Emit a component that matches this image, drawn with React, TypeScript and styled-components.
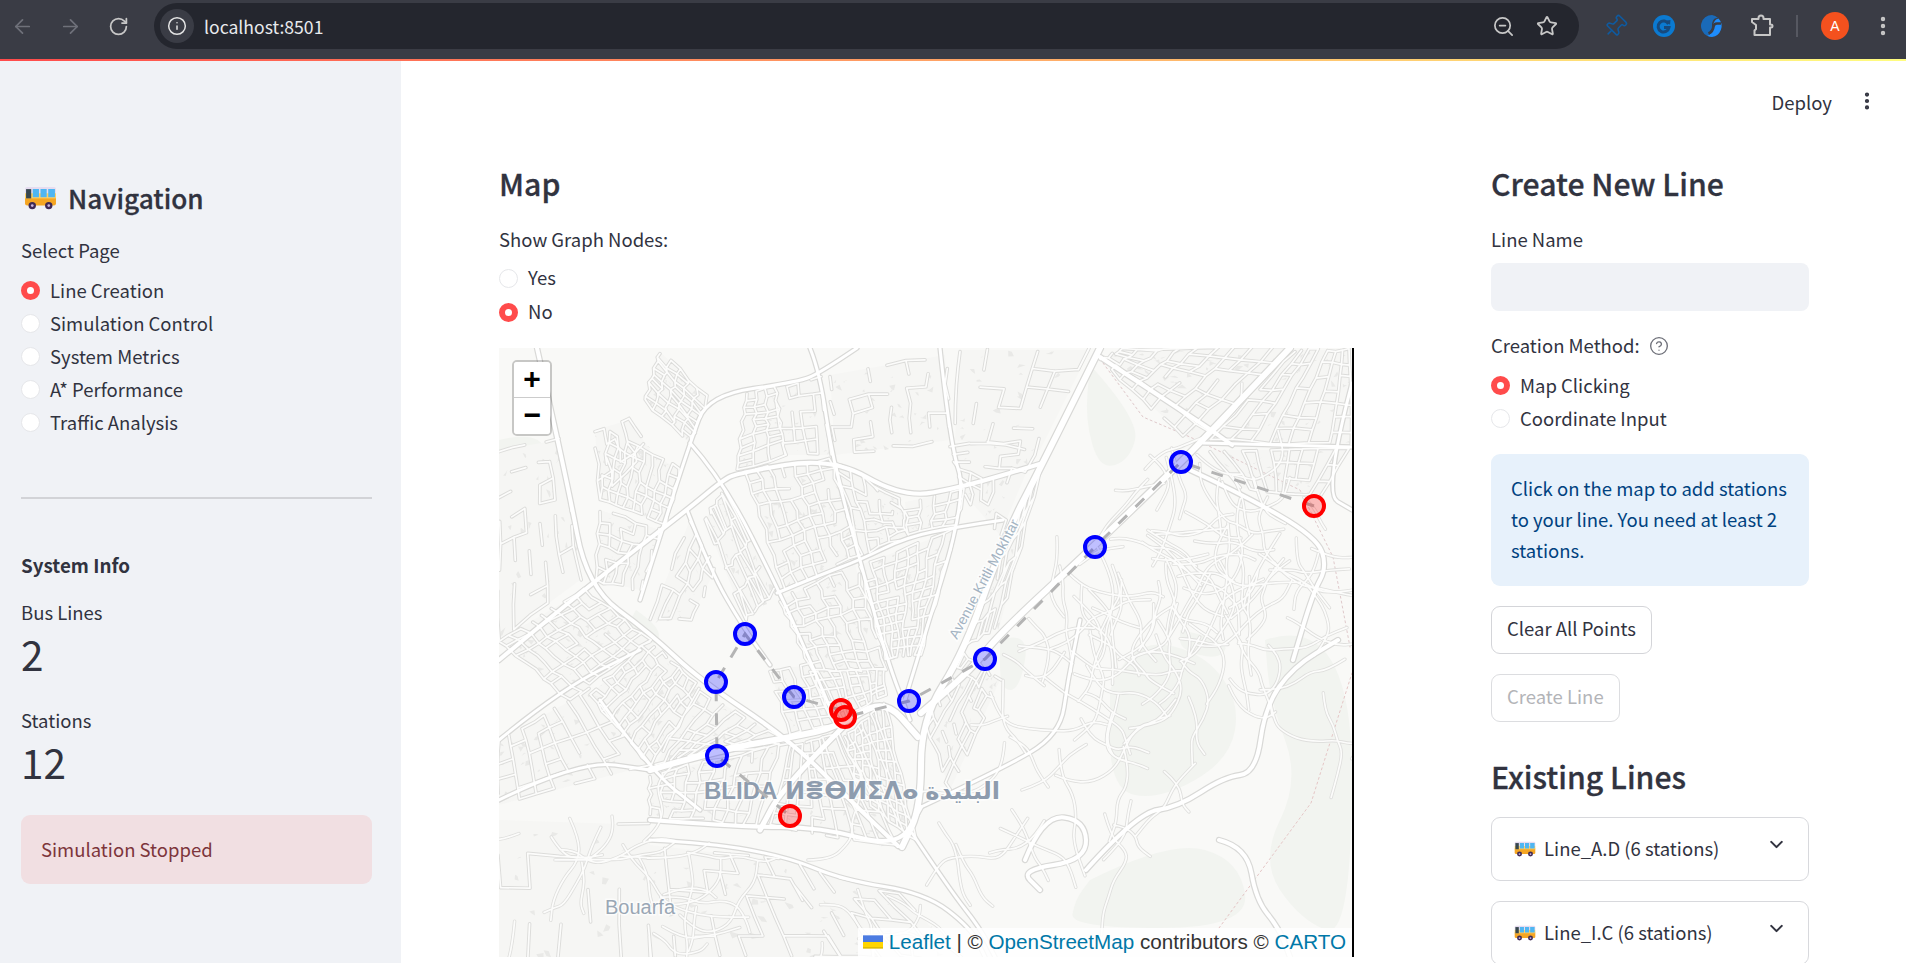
import React from 'react'
import styled, { createGlobalStyle } from 'styled-components'
import { ArrowLeft, ArrowRight, ChevronDown, CircleHelp, EllipsisVertical, Info, Pin, RotateCw, Star, ZoomOut } from 'lucide-react'

const sans = `"Noto Sans CJK SC", "Noto Sans", sans-serif`
const ink = '#31333f'

const GlobalStyle = createGlobalStyle`
  html, body { margin: 0; padding: 0; background: #fff; }
  body { font-family: ${sans}; color: ${ink}; }
  * { box-sizing: border-box; }
`

const Screen = styled.div`
  position: relative;
  height: 963px;
  overflow: hidden;
  display: flex;
  flex-direction: column;
`

/* browser chrome */
const Toolbar = styled.div`
  height: 59px;
  flex: none;
  display: flex;
  align-items: center;
  padding-bottom: 7px;
  background: #3a3c45;
`

const Slot = styled.div<{ $w: number; $color?: string }>`
  width: ${p => p.$w}px;
  flex: none;
  display: flex;
  align-items: center;
  justify-content: center;
  color: ${p => p.$color || '#c7c7c7'};
`

const Gap = styled.div<{ $w: number }>`
  width: ${p => p.$w}px;
  flex: none;
`

const Omnibox = styled.div`
  width: 1425px;
  height: 46px;
  flex: none;
  display: flex;
  align-items: center;
  padding: 0 0 0 6px;
  border-radius: 23px;
  background: #24262e;
`

const SiteInfo = styled.div`
  width: 34px;
  height: 34px;
  border-radius: 50%;
  display: flex;
  align-items: center;
  justify-content: center;
  color: #e3e3e3;
  background: #3a3c45;
`

const Url = styled.span`
  margin-left: 10px;
  flex: 1;
  font-size: 17.600px;
  color: #e8eaed;
`

const Separator = styled.div`
  width: 2px;
  height: 22px;
  background: #565861;
`

const Avatar = styled.div`
  width: 28px;
  height: 28px;
  border-radius: 50%;
  display: flex;
  align-items: center;
  justify-content: center;
  font: 14px "Liberation Sans", sans-serif;
  color: #fff;
  background: #f4511e;
`

const Decoration = styled.div`
  position: absolute;
  top: 59px;
  left: 0;
  right: 0;
  height: 2px;
  background: linear-gradient(90deg, #ff4b4b, #fffd80);
`

/* page */
const Body = styled.div`
  flex: 1;
  min-height: 0;
  display: flex;
`

const Sidebar = styled.aside`
  width: 401px;
  flex: none;
  display: flex;
  flex-direction: column;
  padding: 120px 29px 0 21px;
  background: #f0f2f6;
`

const NavHeading = styled.h2`
  margin: 0;
  display: flex;
  align-items: center;
  gap: 11px;
  padding: 0 0 2px 3px;
  font-size: 26.200px;
  line-height: 38px;
  font-weight: 500;
  -webkit-text-stroke: 0.3px ${ink};
`

const Label = styled.div<{ $top: number }>`
  margin-top: ${p => p.$top}px;
  display: flex;
  align-items: center;
  gap: 9px;
  font-size: 18.500px;
  line-height: 23px;
  padding-bottom: 1px;
`

const RadioGroup = styled.div<{ $top: number }>`
  margin-top: ${p => p.$top}px;
  display: flex;
  flex-direction: column;
`

const RadioRow = styled.div<{ $h?: number }>`
  height: ${p => p.$h || 33}px;
  display: flex;
  align-items: center;
  gap: 10px;
  font-size: 18.500px;
`

const RadioText = styled.span`
  padding-bottom: 2px;
`

const RadioDot = styled.span<{ $on?: boolean }>`
  width: 19px;
  height: 19px;
  flex: none;
  border-radius: 50%;
  background: #fff;
  border: ${p => (p.$on ? '6px solid #ff4b4b' : '1px solid #e6e7ea')};
`

const Rule = styled.hr`
  width: 100%;
  margin: 58px 0 0;
  border: 0;
  border-top: 2px solid #d2d3d7;
`

const InfoHeading = styled.div`
  margin-top: 52px;
  font-size: 18.800px;
  line-height: 28px;
  font-weight: 600;
`

const MetricValue = styled.div`
  margin: -1px 0 1px;
  font-size: 40.500px;
  line-height: 60px;
`

const StatusBox = styled.div`
  height: 69px;
  margin-top: 22px;
  padding: 0 0 2px 20px;
  display: flex;
  align-items: center;
  border-radius: 9px;
  font-size: 18.500px;
  color: #7d353b;
  background: #f1dfe2;
`

const Main = styled.main`
  flex: 1;
  min-width: 0;
  display: flex;
  flex-direction: column;
`

const Header = styled.header`
  height: 104px;
  flex: none;
  display: flex;
  justify-content: flex-end;
  align-items: flex-start;
  padding: 31px 28px 0 0;
  gap: 24px;
`

const Deploy = styled.span`
  font-size: 18.500px;
  line-height: 24px;
`

const Columns = styled.div`
  display: flex;
  gap: 137px;
  padding-left: 98px;
`

const MapColumn = styled.section`
  width: 855px;
  flex: none;
`

const SideColumn = styled.section`
  width: 318px;
  flex: none;
  display: flex;
  flex-direction: column;
`

const Heading = styled.h3<{ $top?: number }>`
  margin: ${p => p.$top || 0}px 0 0;
  padding-bottom: 3px;
  font-size: 30.200px;
  line-height: 41px;
  font-weight: 500;
  -webkit-text-stroke: 0.3px ${ink};
`

const MapFrame = styled.div`
  position: relative;
  width: 855px;
  height: 609px;
  margin-top: 19px;
  border-right: 2px solid #000;
  overflow: hidden;
`

const MapCanvas = styled.svg`
  display: block;
  width: 853px;
  height: 609px;
  background: #f9f9f7;
`

const MapLabel = styled.text<{ $size: number; $color: string; $bold?: boolean }>`
  font-family: "Liberation Sans", "DejaVu Sans", sans-serif;
  font-size: ${p => p.$size}px;
  font-weight: ${p => (p.$bold ? 700 : 400)};
  fill: ${p => p.$color};
  stroke: rgba(255, 255, 255, 0.7);
  stroke-width: 3px;
  paint-order: stroke;
`

const ZoomControl = styled.div`
  position: absolute;
  top: 12px;
  left: 13px;
  width: 40px;
  border: 2px solid rgba(0, 0, 0, 0.2);
  border-radius: 5px;
  background-clip: padding-box;
`

const ZoomButton = styled.div<{ $first?: boolean }>`
  height: 36px;
  padding-top: 2px;
  display: flex;
  align-items: center;
  justify-content: center;
  font: 700 30px "Liberation Mono", monospace;
  color: #000;
  background: #fff;
  border-bottom: ${p => (p.$first ? '1px solid #ccc' : '0')};
  border-radius: ${p => (p.$first ? '3px 3px 0 0' : '0 0 3px 3px')};
`

const Attribution = styled.div`
  position: absolute;
  right: 0;
  bottom: 0;
  height: 29px;
  display: flex;
  align-items: center;
  gap: 6px;
  padding: 0 6px 2px 5px;
  font: 20.650px "Liberation Sans", sans-serif;
  color: #333;
  background: rgba(255, 255, 255, 0.85);
  white-space: pre;
`

const MapLink = styled.span`
  color: #0078a8;
`

const TextInput = styled.div`
  height: 48px;
  margin-top: 11px;
  border-radius: 8px;
  background: #f0f2f6;
`

const InfoBox = styled.div`
  margin-top: 19px;
  padding: 19px 19px 20px 20px;
  border-radius: 9px;
  font-size: 18.500px;
  line-height: 31px;
  color: #004280;
  background: #e7f1fb;
`

const Button = styled.div<{ $top: number; $disabled?: boolean }>`
  align-self: flex-start;
  height: 48px;
  margin-top: ${p => p.$top}px;
  padding: 0 15px 4px;
  display: flex;
  align-items: center;
  border: 1px solid ${p => (p.$disabled ? '#dcdde0' : '#d4d5d9')};
  border-radius: 9px;
  font-size: 18.500px;
  color: ${p => (p.$disabled ? '#b3b4b8' : ink)};
`

const Expander = styled.div<{ $top: number }>`
  height: 64px;
  flex: none;
  margin-top: ${p => p.$top}px;
  padding: 0 21px 0 22px;
  display: flex;
  align-items: center;
  gap: 8px;
  border: 1px solid #d8d9dd;
  border-radius: 9px;
  font-size: 18.500px;
`

const ExpanderTitle = styled.span`
  flex: 1;
  padding-bottom: 2px;
`

const Chevron = styled(ChevronDown)`
  margin-bottom: 10px;
`

const BusIcon = ({ w }: { w: number }) => (
  <svg width={w} height={w * 0.72} viewBox="0 0 32 23">
    <path d="M3 1h26q2 0 2 2v4H1V3q0-2 2-2z" fill="#e6dcf0" />
    <path d="M1 11h30v6q0 2-2 2H3q-2 0-2-2z" fill="#f5a623" />
    <path d="M1 7h30v5H1z" fill="#ffd166" />
    <path d="M2 3h5v9H2z" fill="#37474f" />
    <path d="M8.5 3h6v8h-6zM16 3h6v8h-6zM23.500 3H30v8h-6.500z" fill="#4fb6f2" />
    <circle cx="8" cy="19" r="3.600" fill="#3f2a56" />
    <circle cx="24" cy="19" r="3.600" fill="#3f2a56" />
    <circle cx="8" cy="19" r="1.300" fill="#cbb6dd" />
    <circle cx="24" cy="19" r="1.300" fill="#cbb6dd" />
  </svg>
)

const PuzzleIcon = () => (
  <svg width="24" height="24" viewBox="0 0 24 24" fill="none" stroke="#c7c7c7" strokeWidth="2" strokeLinejoin="round">
    <path d="M2 5h6.500V4a2.500 2.500 0 0 1 5 0v1H20v5.500h1a1.500 1.500 0 0 1 0 3h-1V21H4.500v-4.500l1.500-1.500v-4L2 8z" />
  </svg>
)

const SyncIcon = () => (
  <svg width="24" height="24" viewBox="0 0 24 24" fill="none">
    <circle cx="12" cy="12" r="11" fill="#0b7ad1" />
    <path d="M16.500 10a5.500 5.500 0 1 0 .5 3.500h-5" stroke="#17497c" strokeWidth="3" />
    <path d="M15 6.500l3.500-.5-.5 5z" fill="#17497c" />
  </svg>
)

const SwirlIcon = () => (
  <svg width="24" height="24" viewBox="0 0 24 24" fill="none">
    <path d="M12 1a11 11 0 0 0-5 20.800q5-1 5-9.800t6-8A11 11 0 0 0 12 1z" fill="#1a6ab8" />
    <path d="M18.500 4.500A11 11 0 0 1 12 23a11 11 0 0 1-5-1.200q5-1 6-9.800 1-7 5.500-7.500z" fill="#1e8cfb" />
    <path d="M21 9.500h-4q-3 0-3.500 3-.5 5-5 7" stroke="#3a3c45" strokeWidth="2.600" />
  </svg>
)

/* map drawing, in page coordinates (viewBox starts at the frame's corner) */
type Pt = [number, number]
type Quad = [Pt, Pt, Pt, Pt, number, number, number]

function rng(seed: number) {
  let a = seed
  return () => {
    a = (a + 0x6d2b79f5) | 0
    let t = Math.imul(a ^ (a >>> 15), 1 | a)
    t = (t + Math.imul(t ^ (t >>> 7), 61 | t)) ^ t
    return ((t ^ (t >>> 14)) >>> 0) / 4294967296
  }
}

const mix = (a: Pt, b: Pt, t: number): Pt => [a[0] + (b[0] - a[0]) * t, a[1] + (b[1] - a[1]) * t]
const fmt = (p: Pt) => `${p[0].toFixed(1)} ${p[1].toFixed(1)}`

function smooth(pts: Pt[]) {
  let d = `M${fmt(pts[0])}`
  for (let i = 1; i < pts.length - 1; i++) {
    d += `Q${fmt(pts[i])} ${fmt(mix(pts[i], pts[i + 1], 0.5))}`
  }
  return d + `L${fmt(pts[pts.length - 1])}`
}

const mainRoads: [number, Pt[]][] = [
  [4, [[537, 348], [567, 480], [587, 587], [650, 633], [700, 680], [790, 740], [850, 800], [898, 846]]],
  [4, [[499, 660], [587, 587], [687, 510], [723, 480], [738, 473], [832, 457], [903, 498], [963, 487], [1043, 463]]],
  [3, [[857, 348], [820, 373], [798, 382], [708, 395], [690, 443], [663, 527], [640, 600]]],
  [3, [[810, 348], [820, 373], [832, 457], [860, 560], [887, 660], [910, 720]]],
  [3, [[690, 443], [723, 480], [780, 593], [810, 660], [838, 727]]],
  [3, [[687, 510], [710, 570], [743, 627], [770, 665]]],
  [3, [[777, 593], [820, 575], [860, 560], [907, 537], [957, 527], [1003, 520]]],
  [3, [[940, 348], [950, 443], [967, 497], [917, 660], [905, 700]]],
  [6, [[1100, 348], [1043, 463], [1003, 540], [965, 650], [921, 720], [921, 807], [902, 847]]],
  [6, [[1290, 348], [1200, 443], [1173, 470], [1090, 550], [1000, 633], [971, 670], [921, 713]]],
  [4, [[1100, 357], [1207, 427], [1232, 445]]],
  [3, [[1203, 443], [1352, 447]]],
  [4, [[1190, 470], [1240, 493], [1317, 537], [1327, 567], [1313, 593], [1293, 660]]],
  [3, [[1352, 383], [1323, 493], [1352, 510]]],
  [6, [[650, 770], [719, 750], [792, 737], [838, 727], [884, 698], [918, 737]]],
  [5, [[843, 727], [783, 787], [760, 830]]],
  [4, [[650, 820], [742, 827], [820, 827], [898, 848], [921, 807]]],
  [3, [[600, 700], [650, 770], [700, 810]]],
  [3, [[499, 740], [560, 690], [640, 650]]],
  [3, [[499, 800], [580, 760], [650, 770]]],
  [4, [[1086, 870], [1137, 813], [1178, 807], [1224, 777], [1256, 773], [1265, 707], [1293, 667], [1338, 640]]],
  [4, [[1219, 840], [1247, 847], [1256, 900], [1279, 928], [1290, 957]]],
  [4, [[1025, 860], [1043, 815], [1085, 820], [1087, 860], [1020, 870], [1040, 890]]],
  [3, [[921, 807], [1000, 770], [1060, 735], [1068, 680], [1080, 620]]],
  [3, [[650, 840], [710, 843], [788, 857], [843, 880], [925, 893], [971, 928], [985, 957]]],
  [3, [[912, 833], [950, 890], [980, 928], [995, 957]]],
]

const streetQuads: Quad[] = [
  [[660, 352], [708, 397], [690, 443], [645, 400], 5, 9, 0.95],
  [[747, 392], [775, 388], [785, 455], [737, 470], 3, 10, 1],
  [[775, 388], [822, 378], [830, 455], [785, 455], 4, 5, 0.7],
  [[830, 375], [945, 355], [950, 440], [835, 455], 6, 6, 0.5],
  [[610, 430], [680, 470], [665, 525], [600, 500], 8, 6, 0.95],
  [[499, 450], [560, 440], [580, 580], [499, 640], 5, 8, 0.55],
  [[595, 430], [630, 420], [650, 450], [600, 500], 4, 4, 0.8],
  [[600, 510], [660, 530], [640, 590], [596, 580], 5, 6, 0.7],
  [[690, 520], [715, 570], [690, 620], [650, 620], 4, 6, 0.7],
  [[725, 490], [775, 590], [745, 620], [705, 520], 4, 9, 0.85],
  [[745, 470], [830, 460], [860, 555], [785, 590], 7, 10, 0.85],
  [[836, 462], [900, 500], [907, 535], [862, 555], 5, 8, 0.8],
  [[905, 502], [965, 490], [955, 525], [908, 535], 4, 4, 0.9],
  [[860, 565], [955, 530], [920, 655], [885, 660], 8, 12, 0.95],
  [[780, 600], [855, 565], [885, 670], [812, 670], 6, 10, 0.9],
  [[950, 445], [1040, 440], [1000, 535], [965, 495], 5, 6, 0.65],
  [[1040, 470], [1003, 545], [965, 645], [1000, 625], 6, 6, 0.8],
  [[960, 350], [1090, 350], [1040, 450], [955, 440], 5, 5, 0.45],
  [[499, 640], [585, 590], [650, 640], [570, 700], 8, 8, 0.95],
  [[650, 640], [700, 690], [650, 765], [590, 695], 9, 8, 0.9],
  [[700, 690], [790, 745], [720, 750], [655, 765], 8, 6, 0.85],
  [[810, 670], [885, 670], [885, 695], [835, 725], 8, 5, 0.95],
  [[770, 670], [810, 665], [835, 725], [790, 735], 4, 6, 0.95],
  [[845, 735], [885, 705], [915, 840], [860, 795], 9, 12, 1],
  [[499, 740], [590, 690], [650, 765], [499, 805], 8, 5, 0.8],
  [[650, 775], [780, 745], [755, 825], [650, 815], 10, 6, 0.9],
  [[790, 745], [840, 735], [895, 845], [770, 825], 9, 7, 0.8],
  [[925, 720], [965, 655], [1000, 680], [950, 790], 6, 8, 0.75],
  [[1125, 348], [1290, 348], [1195, 445], [1100, 360], 9, 7, 0.9],
  [[1295, 350], [1350, 350], [1350, 445], [1210, 440], 7, 7, 0.95],
  [[1210, 450], [1350, 450], [1320, 495], [1240, 488], 9, 3, 0.9],
  [[650, 845], [780, 860], [840, 957], [650, 957], 8, 5, 0.35],
  [[499, 820], [650, 825], [650, 957], [499, 957], 5, 4, 0.35],
  [[780, 860], [900, 895], [960, 957], [840, 957], 6, 4, 0.4],
]

function buildStreets() {
  const rand = rng(27)
  let streets = ''
  let blocks = ''
  let buildings = ''
  for (const [a, b, c, d, nu, nv, keep] of streetQuads) {
    const at = (u: number, v: number): Pt => {
      const p = mix(mix(a, b, u), mix(d, c, u), v)
      return [p[0] + Math.sin(u * 37 + v * 91) * 1.6, p[1] + Math.cos(u * 53 + v * 71) * 1.6]
    }
    blocks += `M${fmt(a)}L${fmt(b)}L${fmt(c)}L${fmt(d)}Z`
    for (let i = 0; i <= nu; i++) {
      for (let j = 0; j < nv; j++) {
        if (rand() < keep) streets += `M${fmt(at(i / nu, j / nv))}L${fmt(at(i / nu, (j + 1) / nv))}`
      }
    }
    for (let j = 0; j <= nv; j++) {
      for (let i = 0; i < nu; i++) {
        if (rand() < keep * 0.7) streets += `M${fmt(at(i / nu, j / nv))}L${fmt(at((i + 1) / nu, j / nv))}`
      }
    }
    for (let n = 0; n < nu * nv * 0.8; n++) {
      const u = rand()
      const v = rand()
      const s = 0.012 + rand() * 0.03
      buildings += `M${fmt(at(u, v))}L${fmt(at(u + s, v))}L${fmt(at(u + s, v + s))}L${fmt(at(u, v + s))}Z`
    }
  }
  return { streets, blocks, buildings }
}

// winding lanes on the hills, started from [x, y, heading, count]
const laneSeeds: [number, number, number, number][] = [
  [1150, 500, 0.5, 12],
  [1240, 530, 1.6, 14],
  [1300, 580, 1.2, 14],
  [1210, 610, 1.4, 14],
  [1120, 590, 0.4, 14],
  [1060, 620, 1.2, 12],
  [1170, 690, 2.4, 10],
  [1030, 700, 0.3, 12],
  [1000, 790, 1.0, 10],
  [1140, 770, 1.0, 6],
  [700, 880, 0.4, 12],
  [560, 870, 1.1, 10],
  [850, 915, 0.6, 8],
  [1330, 700, 2.0, 4],
]

function buildLanes() {
  const rand = rng(91)
  const lanes: string[] = []
  for (const [x, y, heading, count] of laneSeeds) {
    for (let n = 0; n < count; n++) {
      let p: Pt = [x + (rand() - 0.5) * 130, y + (rand() - 0.5) * 110]
      let dir = heading + (rand() - 0.5) * 2.4
      const pts: Pt[] = [p]
      const steps = 3 + Math.floor(rand() * 5)
      for (let s = 0; s < steps; s++) {
        dir += (rand() - 0.5) * 1.5
        const len = 10 + rand() * 16
        p = [p[0] + Math.cos(dir) * len, p[1] + Math.sin(dir) * len]
        pts.push(p)
      }
      lanes.push(smooth(pts))
    }
  }
  return lanes.join('')
}

const greenPatches: Pt[][] = [
  [[1110, 690], [1130, 640], [1200, 650], [1240, 700], [1230, 760], [1160, 800], [1110, 790]],
  [[1265, 640], [1352, 610], [1352, 940], [1300, 920], [1260, 860], [1300, 780], [1270, 700]],
  [[1090, 880], [1170, 840], [1240, 860], [1250, 928], [1070, 928], [1075, 900]],
  [[1090, 365], [1140, 420], [1130, 460], [1100, 470], [1085, 420]],
  [[1000, 640], [1030, 630], [1020, 690], [1000, 690]],
  [[1180, 630], [1230, 640], [1220, 660], [1180, 650]],
  [[499, 440], [540, 430], [550, 470], [499, 480]],
  [[636, 610], [665, 630], [650, 650], [625, 630]],
]

const dashedRoutes: Pt[][] = [
  [[1314, 506], [1181, 462], [1095, 547], [985, 659], [909, 701], [845, 717]],
  [[841, 710], [794, 697], [745, 634], [716, 682], [717, 756], [790, 816]],
]

const stations: [number, number, string][] = [
  [1181, 462, '#0000ff'],
  [1095, 547, '#0000ff'],
  [985, 659, '#0000ff'],
  [909, 701, '#0000ff'],
  [794, 697, '#0000ff'],
  [745, 634, '#0000ff'],
  [716, 682, '#0000ff'],
  [717, 756, '#0000ff'],
  [1314, 506, '#ff0000'],
  [841, 710, '#ff0000'],
  [845, 717, '#ff0000'],
  [790, 816, '#ff0000'],
]

const { streets, blocks, buildings } = buildStreets()
const lanes = buildLanes()

const Road = styled.path<{ $w: number; $color: string }>`
  fill: none;
  stroke: ${p => p.$color};
  stroke-width: ${p => p.$w}px;
  stroke-linecap: round;
  stroke-linejoin: round;
`

const MapDrawing = () => (
  <MapCanvas viewBox="499 348 853 609">
    {greenPatches.map((pts, i) => (
      <path key={i} d={smooth([...pts, pts[0]]) + 'Z'} fill="#f2f4f0" />
    ))}
    <path d={blocks} fill="#f6f6f4" />
    <path d={buildings} fill="#e9e9e7" />
    <Road d="M1103 363L1143 417 1190 437 1300 490 1333 557 1350 647" $w={1} $color="#dfc9cb" strokeDasharray="2 3" />
    <Road d="M1219 928L1311 803 1352 673" $w={1} $color="#e5c6c6" strokeDasharray="2 3" />
    <Road d={streets} $w={3.600} $color="#dcdcda" />
    <Road d={lanes} $w={3.400} $color="#dfdfdd" />
    {mainRoads.map(([w, pts], i) => (
      <Road key={i} d={smooth(pts)} $w={w + 2.4} $color="#d9d9d7" />
    ))}
    <Road d={streets} $w={1.700} $color="#fcfcfb" />
    <Road d={lanes} $w={1.700} $color="#fcfcfb" />
    {mainRoads.map(([w, pts], i) => (
      <Road key={i} d={smooth(pts)} $w={w} $color="#fff" />
    ))}
    <MapLabel x={704} y={799} $size={24} $color="#8e9cae" $bold>BLIDA</MapLabel>
    <MapLabel x={785} y={799} $size={24} $color="#8e9cae" $bold>ⵍⴻⴱⵍⵉⴷⴰ</MapLabel>
    <MapLabel x={1000} y={799} $size={24} $color="#8e9cae" $bold textAnchor="end">البليدة</MapLabel>
    <MapLabel x={640} y={914} $size={20} $color="#9aa7b5" textAnchor="middle">Bouarfa</MapLabel>
    <MapLabel x={957} y={640} $size={14} $color="#a3b3c2" transform="rotate(-62 957 640)">Avenue Kritli Mokhtar</MapLabel>
    {dashedRoutes.map((pts, i) => (
      <polyline
        key={i}
        points={pts.map(p => p.join(',')).join(' ')}
        fill="none"
        stroke="#b4b4b4"
        strokeWidth="3"
        strokeDasharray="12 12"
      />
    ))}
    {stations.map(([x, y, color]) => (
      <circle key={`${x}-${y}`} cx={x} cy={y} r={10} fill={color} fillOpacity={0.25} stroke={color} strokeWidth={4} />
    ))}
  </MapCanvas>
)

const pages = ['Line Creation', 'Simulation Control', 'System Metrics', 'A* Performance', 'Traffic Analysis']

export default function App() {
  return (
    <Screen>
      <GlobalStyle />
      <Toolbar>
        <Slot $w={44} $color="#6f717a"><ArrowLeft size={23} strokeWidth={1.8} /></Slot>
        <Gap $w={4} />
        <Slot $w={44} $color="#6f717a"><ArrowRight size={23} strokeWidth={1.8} /></Slot>
        <Gap $w={4} />
        <Slot $w={44}><RotateCw size={21} strokeWidth={2} /></Slot>
        <Gap $w={14} />
        <Omnibox>
          <SiteInfo><Info size={20} strokeWidth={1.8} /></SiteInfo>
          <Url>localhost:8501</Url>
          <Slot $w={43}><ZoomOut size={23} strokeWidth={1.8} /></Slot>
          <Slot $w={43}><Star size={22} strokeWidth={2} /></Slot>
          <Gap $w={11} />
        </Omnibox>
        <Gap $w={12} />
        <Slot $w={48} $color="#0f5a9f"><Pin size={25} strokeWidth={1.5} style={{ transform: 'rotate(45deg)' }} /></Slot>
        <Slot $w={50}><SyncIcon /></Slot>
        <Slot $w={46}><SwirlIcon /></Slot>
        <Slot $w={54}><PuzzleIcon /></Slot>
        <Slot $w={16}><Separator /></Slot>
        <Slot $w={60}><Avatar>A</Avatar></Slot>
        <Slot $w={36}><EllipsisVertical size={24} strokeWidth={2.4} /></Slot>
      </Toolbar>
      <Decoration />
      <Body>
        <Sidebar>
          <NavHeading><BusIcon w={33} />Navigation</NavHeading>
          <Label $top={20}>Select Page</Label>
          <RadioGroup $top={11}>
            {pages.map((page, i) => (
              <RadioRow key={page}><RadioDot $on={i === 0} /><RadioText>{page}</RadioText></RadioRow>
            ))}
          </RadioGroup>
          <Rule />
          <InfoHeading>System Info</InfoHeading>
          <Label $top={22}>Bus Lines</Label>
          <MetricValue>2</MetricValue>
          <Label $top={24}>Stations</Label>
          <MetricValue>12</MetricValue>
          <StatusBox>Simulation Stopped</StatusBox>
        </Sidebar>
        <Main>
          <Header>
            <Deploy>Deploy</Deploy>
            <EllipsisVertical size={22} strokeWidth={2.6} />
          </Header>
          <Columns>
            <MapColumn>
              <Heading>Map</Heading>
              <Label $top={21}>Show Graph Nodes:</Label>
              <RadioGroup $top={9}>
                <RadioRow $h={34}><RadioDot /><RadioText>Yes</RadioText></RadioRow>
                <RadioRow $h={34}><RadioDot $on /><RadioText>No</RadioText></RadioRow>
              </RadioGroup>
              <MapFrame>
                <MapDrawing />
                <ZoomControl>
                  <ZoomButton $first>+</ZoomButton>
                  <ZoomButton>−</ZoomButton>
                </ZoomControl>
                <Attribution>
                  <svg width="20" height="14" viewBox="0 0 12 8">
                    <path fill="#4c7be1" d="M0 0h12v4H0z" />
                    <path fill="#ffd500" d="M0 4h12v3H0z" />
                    <path fill="#e0bc00" d="M0 7h12v1H0z" />
                  </svg>
                  <span>
                    <MapLink>Leaflet</MapLink> | © <MapLink>OpenStreetMap</MapLink> contributors © <MapLink>CARTO</MapLink>
                  </span>
                </Attribution>
              </MapFrame>
            </MapColumn>
            <SideColumn>
              <Heading>Create New Line</Heading>
              <Label $top={21}>Line Name</Label>
              <TextInput />
              <Label $top={23}>Creation Method: <CircleHelp size={20} strokeWidth={1.6} color="#6d6f78" /></Label>
              <RadioGroup $top={11}>
                <RadioRow><RadioDot $on /><RadioText>Map Clicking</RadioText></RadioRow>
                <RadioRow><RadioDot /><RadioText>Coordinate Input</RadioText></RadioRow>
              </RadioGroup>
              <InfoBox>Click on the map to add stations to your line. You need at least 2 stations.</InfoBox>
              <Button $top={20}>Clear All Points</Button>
              <Button $top={20} $disabled>Create Line</Button>
              <Heading $top={34}>Existing Lines</Heading>
              <Expander $top={17}>
                <BusIcon w={22} />
                <ExpanderTitle>Line_A.D (6 stations)</ExpanderTitle>
                <Chevron size={21} strokeWidth={2.4} />
              </Expander>
              <Expander $top={20}>
                <BusIcon w={22} />
                <ExpanderTitle>Line_I.C (6 stations)</ExpanderTitle>
                <Chevron size={21} strokeWidth={2.4} />
              </Expander>
            </SideColumn>
          </Columns>
        </Main>
      </Body>
    </Screen>
  )
}
